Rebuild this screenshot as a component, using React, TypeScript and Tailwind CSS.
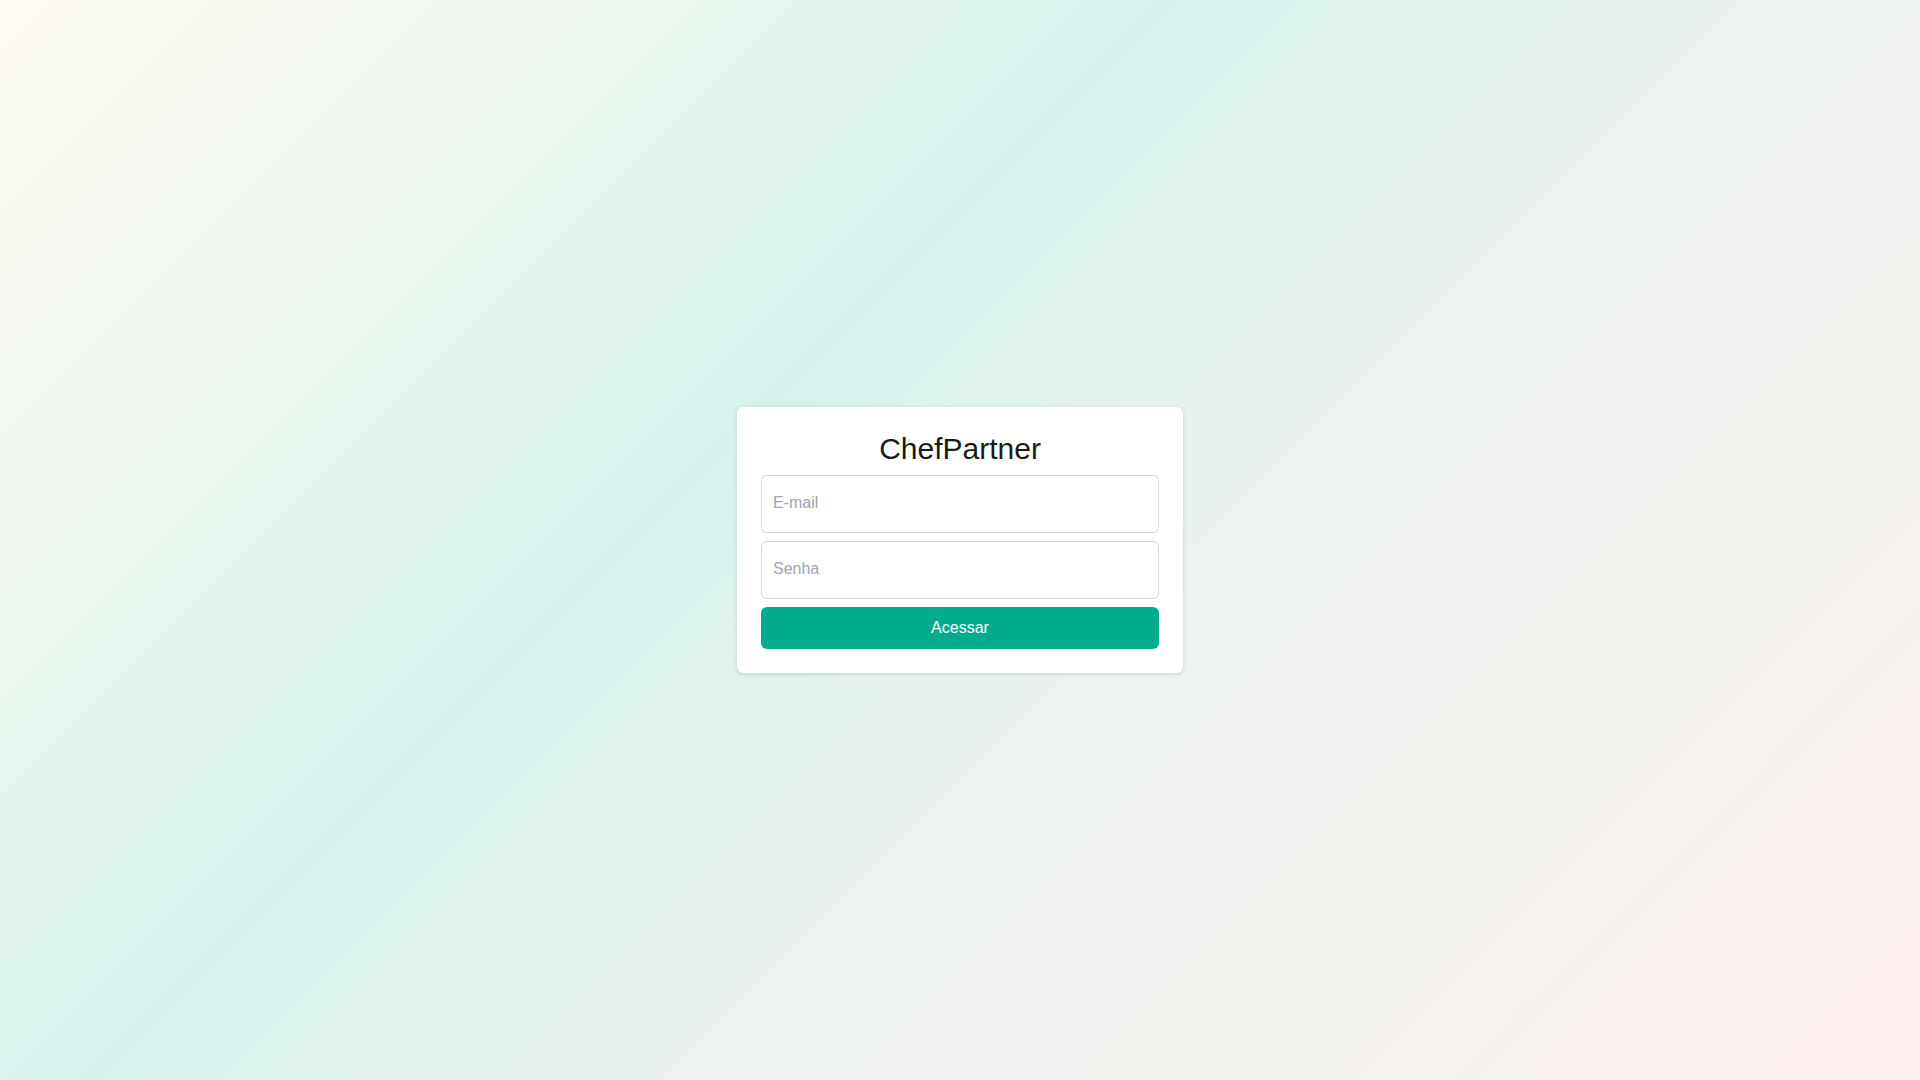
export default function App() {
  return (
    <div className="min-h-screen w-full flex items-center justify-center bg-[linear-gradient(135deg,#fefbf2_0%,#eef7ef_20%,#d4f2ec_39%,#e2f1ed_49%,#eef2ef_62%,#f3f1ee_80%,#fdefee_100%)] font-['Liberation_Sans',Arial,sans-serif]">
      <form
        onSubmit={(e) => e.preventDefault()}
        className="w-[446px] bg-white rounded-md shadow-[0_1px_4px_rgba(0,0,0,0.15)] p-6 flex flex-col gap-2"
      >
        <h1 className="text-[30px] leading-9 text-center text-[#1a1a1a]">ChefPartner</h1>
        <input
          type="email"
          placeholder="E-mail"
          className="h-[58px] w-full border border-[#d1d5db] rounded-md pl-[11px] pr-3 pb-[2px] text-base text-gray-800 placeholder:text-[#9ca3af] outline-none"
        />
        <input
          type="password"
          placeholder="Senha"
          className="h-[58px] w-full border border-[#d1d5db] rounded-md pl-[11px] pr-3 pb-[2px] text-base text-gray-800 placeholder:text-[#9ca3af] outline-none"
        />
        <button
          type="submit"
          className="h-[42px] w-full bg-[#00ab8e] text-white text-base rounded-md"
        >
          Acessar
        </button>
      </form>
    </div>
  )
}
